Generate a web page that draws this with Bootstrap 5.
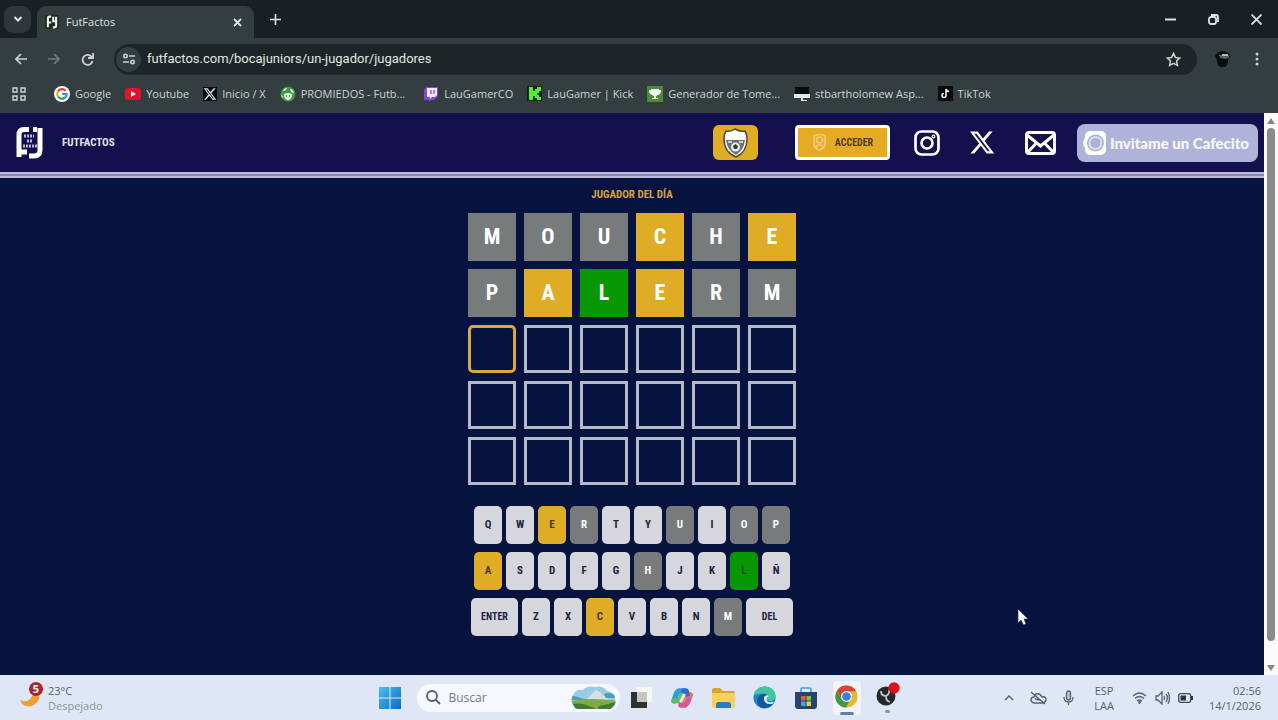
<!DOCTYPE html>
<html lang="es" class="h-100">
<head>
<meta charset="utf-8">
<meta name="viewport" content="width=device-width, initial-scale=1">
<title>FutFactos</title>
<link href="https://cdn.jsdelivr.net/npm/bootstrap@5.3.0/dist/css/bootstrap.min.css" rel="stylesheet">
<style>
:root{--ui:"Open Sans","Noto Sans",sans-serif;--cond:"DIN Condensed","Roboto Condensed","Liberation Sans Narrow",Roboto,sans-serif;--gold:#dfac26}
body{font-family:var(--ui);font-size:12px;line-height:16px;background:#05133e}
svg{display:block;flex:none}
.plain-btn{background:none;border:0;padding:0;color:inherit;display:flex;align-items:center;justify-content:center}
/* browser window */
.tab-strip{background:#182023;height:38px;color:#dfe3e3}
.tab-search{width:27px;height:27px;border-radius:9px;background:#2f3739}
.page-tab{width:217px;height:32px;background:#343d3f;border-radius:9px 9px 0 0;padding-left:8px;padding-right:12px;margin-left:2px;gap:7px;font-size:11px}
.fav{width:14px;height:14px;background:#1d2b22}
.tool-row{background:#343d3f;height:42px;color:#cdd2d2}
.address{background:#1d2527;height:31px;border-radius:16px;padding-left:2px;padding-right:16px;gap:6px}
.address input{background:none;border:0;outline:0;color:#e2e5e5;font:13px/20px Roboto,sans-serif;padding:0;min-width:0}
.site-info{width:25px;height:25px;border-radius:50%;background:#343d3f}
.tool-nav{width:114px;gap:21px;padding-left:15px}
.marks{background:#343d3f;height:33px;color:#cfd4d4;gap:14px;font-size:11px;padding:0 0 6px 12px}
.marks a{color:inherit;text-decoration:none;gap:5px;white-space:nowrap}
.apps-btn{margin-right:14px}
/* game */
.site-nav{background:#13104d;height:65px;border-bottom:6px double #bdb9da;padding:0 6px 0 15px;background-clip:padding-box}
.line-wrap{background:#8a86b4}
.brand-text{font:bold 11px/20px var(--cond);color:#e4e2f2;text-decoration:none;gap:18px}
.club-btn{width:45px;height:35px;background:var(--gold);border-radius:6px}
.login-btn{width:95px;height:35px;background:#e5ab24;border:3px solid #fff;border-radius:4px;font:bold 10px/20px var(--cond);color:#52391c;gap:8px;margin-left:37px;padding:0}
.social{gap:30px;color:#fff;margin-left:24px;margin-right:21px}
.social a{color:inherit}
.coffee{height:38px;width:181px;background:#afb3d9;border-radius:8px;color:#f7f7ff;font:900 15px/20px Lato,sans-serif;text-decoration:none;white-space:nowrap;padding-left:5px;gap:3px}
.day-title{font:bold 11px/18px var(--cond);color:#dba239;margin:8px 0 9px}
.board{display:grid;grid-template-columns:repeat(6,48px);grid-auto-rows:48px;gap:8px;margin-bottom:21px}
.tile{display:flex;align-items:center;justify-content:center;color:#fff;font:bold 22px/30px var(--cond);border:3px solid #b4bac6}
.is-miss{background:#777b7b;border-color:#777b7b;color:#fff}
.is-near{background:var(--gold);border-color:var(--gold)}
.is-hit{background:#089806;border-color:#089806}
.is-next{border-color:#dca83e;border-radius:5px}
.keys{gap:8px}
.keys>div{gap:4px}
.key{width:28px;height:38px;padding:0;border:0;border-radius:5px;background-color:#d5d7dd;color:#1b2143;font:bold 11px/16px var(--cond)}
.key.is-near{background:var(--gold);color:#4b3715}
.key.is-miss{background:#777b7b;color:#fff}
.key.is-hit{background:#089806;color:#124715}
.key-wide{width:47px;font-size:10px}
.scroller{width:14px;background:#fafafa;padding:5px 0 4px}
.thumb{width:8px;border-radius:4px;background:#8a8b8a}
.pointer{position:absolute;left:1017px;top:608px}
/* taskbar */
.task{height:45px;background:#dfe7f6;color:#596270;display:grid;grid-template-columns:1fr auto 1fr}
.badge-n{position:absolute;left:9px;top:-7px;width:14px;height:14px;border-radius:50%;background:#b3202c;color:#fff;font-weight:700;font-size:11px;line-height:14px;text-align:center}
.weather{font-size:11px;line-height:15px}
.sky{color:#8a93a0}
.seek{width:203px;height:28px;border-radius:14px;background:#f5f8fe;padding-left:9px;padding-right:3px}
.seek input{background:none;border:0;outline:0;padding:0;min-width:0;color:#737984;font-size:12px;line-height:18px}
.seek input::placeholder{color:#737984;opacity:1}
.mid{padding-left:2px}
.apps{gap:13px}
.app{width:28px;height:34px}
.app.is-on{background:#f3f4fb;border-radius:4px}
.tray{font-size:11px;line-height:15px;padding-right:17px}
</style>
</head>
<body class="d-flex flex-column min-vh-100">
<header>
  <div class="tab-strip d-flex align-items-end">
    <button class="plain-btn tab-search align-self-center ms-1 me-1" aria-label="Buscar pestañas"><svg width="10" height="10" viewBox="0 0 10 10" fill="none" stroke="currentColor" stroke-width="2"><path d="M1.500 3 5 6.500 8.500 3"/></svg></button>
    <div class="page-tab d-flex align-items-center">
      <span class="fav d-inline-flex"><svg width="14" height="14" viewBox="0 0 30 34" fill="none" stroke="#eef4e6" stroke-width="5"><path d="M13 4H9Q5 4 5 9V30M5 18H13M18 4V15H25V4M25 15V26Q25 30 20 30H17"/></svg></span>
      <span class="flex-grow-1">FutFactos</span>
      <button class="plain-btn" aria-label="Cerrar pestaña"><svg width="9" height="9" viewBox="0 0 9 9" stroke="currentColor" stroke-width="1.800"><path d="m1 1 7 7M8 1 1 8"/></svg></button>
    </div>
    <button class="plain-btn align-self-center ms-3" aria-label="Nueva pestaña"><svg width="11" height="11" viewBox="0 0 11 11" stroke="currentColor" stroke-width="1.600"><path d="M5.500 0v11M0 5.500h11"/></svg></button>
    <div class="ms-auto align-self-center d-flex align-items-center pe-3" style="gap:32px">
      <button class="plain-btn" aria-label="Minimizar"><svg width="11" height="11" viewBox="0 0 11 11" stroke="currentColor" stroke-width="2"><path d="M0 5.500h11"/></svg></button>
      <button class="plain-btn" aria-label="Restaurar"><svg width="11" height="11" viewBox="0 0 11 11" stroke="currentColor" stroke-width="1.800" fill="none"><rect x="1" y="3" width="7" height="7" rx="2"/><path d="M3 1h5q2 0 2 2v5"/></svg></button>
      <button class="plain-btn" aria-label="Cerrar"><svg width="11" height="11" viewBox="0 0 11 11" stroke="currentColor" stroke-width="1.800"><path d="m.5.5 10 10M10.500.5l-10 10"/></svg></button>
    </div>
  </div>
  <div class="tool-row d-flex align-items-center">
    <div class="tool-nav d-flex align-items-center">
      <button class="plain-btn" aria-label="Atrás"><svg width="12" height="12" viewBox="0 0 12 12" fill="none" stroke="currentColor" stroke-width="1.700"><path d="M12 6H1M6 1 1 6l5 5"/></svg></button>
      <button class="plain-btn" aria-label="Adelante"><svg width="12" height="12" viewBox="0 0 12 12" fill="none" stroke="#737c7d" stroke-width="1.700"><path d="M0 6h11M6 1l5 5-5 5"/></svg></button>
      <button class="plain-btn" aria-label="Recargar"><svg width="13" height="13" viewBox="0 0 13 13" fill="none" stroke="currentColor" stroke-width="1.800"><path d="M11 4.500A5 5 0 1 0 11.500 8M12 0v5H7"/></svg></button>
    </div>
    <div class="address d-flex align-items-center flex-grow-1">
      <button class="plain-btn site-info" aria-label="Información del sitio"><svg width="12" height="12" viewBox="0 0 12 12" fill="none" stroke="currentColor" stroke-width="1.600"><path d="M6 3h6M0 9h6"/><circle cx="2.500" cy="3" r="1.700"/><circle cx="9.500" cy="9" r="1.700"/></svg></button>
      <input class="flex-grow-1" aria-label="Dirección" value="futfactos.com/bocajuniors/un-jugador/jugadores">
      <button class="plain-btn" aria-label="Favorito"><svg width="15" height="15" viewBox="0 0 16 16" fill="none" stroke="currentColor" stroke-width="1.600"><path d="m8 1.500 2 4.300 4.700.6-3.500 3.200.9 4.700L8 12l-4.100 2.300.9-4.700L1.300 6.400 6 5.800z"/></svg></button>
    </div>
    <button class="plain-btn ms-3" aria-label="Perfil"><svg width="18" height="18" viewBox="0 0 18 18"><path d="M2 6Q4 1 10 1q6 1 7 5l-2 4q0 5-3 7H7Q4 15 4 10z" fill="#090d0e"/><path d="M6 5h10v3l-4 1-5-1z" fill="#59605f"/><path d="M9 5h6" stroke="#dce0dc" stroke-width="1.500"/></svg></button>
    <button class="plain-btn ps-3 ms-2" style="padding-right:19px" aria-label="Menú"><svg width="4" height="14" viewBox="0 0 4 14" fill="currentColor"><circle cx="2" cy="2" r="1.500"/><circle cx="2" cy="7" r="1.500"/><circle cx="2" cy="12" r="1.500"/></svg></button>
  </div>
  <nav class="marks d-flex align-items-center" aria-label="Marcadores">
    <button class="plain-btn apps-btn" aria-label="Aplicaciones"><svg width="14" height="14" viewBox="0 0 14 14" fill="none" stroke="currentColor" stroke-width="1.400"><path d="M1 1h4v4H1zM9 1h4v4H9zM1 9h4v4H1zM9 9h4v4H9z"/></svg></button>
    <a href="#" class="d-flex align-items-center"><svg width="16" height="16" viewBox="0 0 16 16" fill="none" stroke-width="2.200"><circle cx="8" cy="8" r="8" fill="#fff"/><path d="M4 5.500A4.700 4.700 0 0 1 11.500 4.700" stroke="#e34133"/><path d="M4 5.500a4.700 4.700 0 0 0 0 5" stroke="#f4b400"/><path d="M4 10.500a4.700 4.700 0 0 0 7 1.200" stroke="#31a350"/><path d="M11 11.700A4.700 4.700 0 0 0 12.600 8H8" stroke="#4285f4"/></svg>Google</a>
    <a href="#" class="d-flex align-items-center"><svg width="16" height="16" viewBox="0 0 16 16"><rect y="2" width="16" height="12" rx="3" fill="#e5102b"/><path d="m6 5 5 3-5 3z" fill="#fff"/></svg>Youtube</a>
    <a href="#" class="d-flex align-items-center"><svg width="14" height="14" viewBox="0 0 24 24"><path fill="#0b0e0f" d="M0 0h24v24H0z"/><path fill="#dde" d="M18.200 2.200h3.300l-7.200 8.300 8.500 11.200h-6.600l-5.200-6.800-6 6.800H1.700l7.700-8.800L1.300 2.200H8l4.700 6.300zm-1.100 17.600h1.800L7.100 4.100h-2z"/></svg>Inicio / X</a>
    <a href="#" class="d-flex align-items-center"><svg width="16" height="16" viewBox="0 0 16 16"><circle cx="8" cy="8" r="7.500" fill="#3a9c3f"/><path d="M3 5q1-3 4-3-1 3-4 3zM10 3q3 0 4 4-3 0-4-4zM4 8q4-2 8 0v2q-1 4-4 4t-4-4zM1 8l2 3-1 1z" fill="#e9f6e6"/><path d="M6 9h1v2H6zM9 9h1v2H9z" fill="#3a9c3f"/></svg>PROMIEDOS - Futb...</a>
    <a href="#" class="d-flex align-items-center ms-1"><svg width="16" height="16" viewBox="0 0 16 16"><path d="M3 1h12v9l-4 4H8l-2 2v-2H1V4z" fill="#8447df"/><path d="M4 2h10v7l-2 2H9l-2 2v-2H4z" fill="#f0e9ff"/><path d="M8 4v4m3-4v4" stroke="#8447df" stroke-width="1.300"/></svg>LauGamerCO</a>
    <a href="#" class="d-flex align-items-center"><svg width="15" height="15" viewBox="0 0 15 15"><path fill="#10210e" d="M0 0h15v15H0z"/><path d="M2 1h4v4h2V3h2V1h4v4h-2v2h-2v2h2v2h2v3h-4v-2H8v-2H6v4H2z" fill="#48f51f"/></svg>LauGamer | Kick</a>
    <a href="#" class="d-flex align-items-center"><svg width="16" height="16" viewBox="0 0 16 16"><path fill="#4c8a3b" d="M0 0h16v16H0z"/><path d="M4 3h8v1h2v2q-1 3-3 3l-2 1v2h2v1H5v-1h2v-2L5 9Q3 9 2 6V4h2z" fill="#f2f9ed"/></svg>Generador de Tome...</a>
    <a href="#" class="d-flex align-items-center"><svg width="16" height="16" viewBox="0 0 16 16"><path fill="#080b0c" d="M1 1h14v7H1z"/><path d="M0 8h16v4H9v2h4v1H7v-3H0z" fill="#e6e8e7"/></svg>stbartholomew Asp...</a>
    <a href="#" class="d-flex align-items-center"><svg width="15" height="15" viewBox="0 0 15 15"><path fill="#080a0b" d="M0 0h15v15H0z"/><path d="M8 3v6.500A2 2 0 1 1 6 7.500M8 3q1 2.500 3 2.500" fill="none" stroke="#f2edf1" stroke-width="1.600"/></svg>TikTok</a>
  </nav>
</header>

<div class="d-flex flex-grow-1">
  <div class="flex-grow-1">
    <div class="line-wrap">
    <nav class="site-nav d-flex align-items-center">
      <a href="#" class="d-flex align-items-center brand-text"><svg width="29" height="34" viewBox="0 0 29 34" fill="none"><path d="M14 3.500H9Q4 3.500 4 9v22M4 26h8M18 3.500h4M25 2v22q0 6-6 6h-5" stroke="#fff" stroke-width="5"/><path d="M9 10h10M12 15h5M8 20h14" stroke="#b9b7d8" stroke-width="3" stroke-dasharray="2 1"/></svg>FUTFACTOS</a>
      <button class="plain-btn club-btn ms-auto" aria-label="Club"><svg width="25" height="30" viewBox="0 0 25 30"><path d="M3 3q5 1 9-2 5 3 10 2 2 3 2 8 0 13-11 18Q1 24 1 11q0-5 2-8z" fill="#fff" stroke="#524932" stroke-width="1.500"/><path d="M3 12h19q-1 10-9 15Q4 22 3 12z" fill="#6c7178"/><circle cx="12.500" cy="19" r="4.500" fill="#eceef0"/><path d="m12.500 16 2.500 2-1 3h-3l-1-3z" fill="#343a44"/><path d="M5 14h4M16 14h4" stroke="#eee" stroke-width="1.500"/></svg></button>
      <button class="login-btn d-flex align-items-center justify-content-center"><svg width="15" height="17" viewBox="0 0 15 17" fill="none" stroke="#f0cc7a" stroke-width="1.600"><circle cx="7.500" cy="6" r="3"/><path d="M2 2Q7.500-1 13 2v9q-1 4-5.500 5Q3 15 2 11zM4 13q3-5 7 0"/></svg>ACCEDER</button>
      <div class="social d-flex align-items-center">
        <a href="#" aria-label="Instagram"><svg width="26" height="26" viewBox="0 0 26 26" fill="none" stroke="currentColor" stroke-width="2.700"><rect x="1.500" y="1.500" width="23" height="23" rx="6"/><circle cx="13" cy="13" r="5.500"/><circle cx="19.500" cy="6.500" r=".6"/></svg></a>
        <a href="#" aria-label="X"><svg width="25" height="25" viewBox="0 0 24 24" fill="currentColor"><path d="M18.200 1.500h3.600l-7.800 9L23.200 22.500H16l-5.600-7.300-6.400 7.300H.4l8.400-9.600L0 1.500h7.400l5 6.700zm-1.200 19h2L6.200 3.500H4z"/></svg></a>
        <a href="#" aria-label="Correo"><svg width="31" height="24" viewBox="0 0 31 24" fill="none" stroke="currentColor" stroke-width="3"><rect x="1.500" y="1.500" width="28" height="21" rx="2.500"/><path d="m2 4 13.500 11L29 4M3 21l8.500-9M28 21l-8.500-9"/></svg></a>
      </div>
      <a href="#" class="coffee d-flex align-items-center"><svg width="25" height="26" viewBox="0 0 25 26"><rect x="3" y="1" width="21" height="24" rx="5" fill="#fff"/><circle cx="13.500" cy="13" r="8.500" fill="#aeb1d4"/><circle cx="13.500" cy="13" r="6" fill="none" stroke="#d9dced" stroke-width="2"/><path d="M5 7Q-1 13 5 19" stroke="#fff" stroke-width="2" fill="none"/></svg>Invitame un Cafecito</a>
    </nav>
    </div>
    <main class="d-flex flex-column align-items-center">
      <h1 class="day-title">JUGADOR DEL DÍA</h1>
      <div class="board">
        <div class="tile is-miss">M</div><div class="tile is-miss">O</div><div class="tile is-miss">U</div><div class="tile is-near">C</div><div class="tile is-miss">H</div><div class="tile is-near">E</div>
        <div class="tile is-miss">P</div><div class="tile is-near">A</div><div class="tile is-hit">L</div><div class="tile is-near">E</div><div class="tile is-miss">R</div><div class="tile is-miss">M</div>
        <div class="tile is-next"></div><div class="tile"></div><div class="tile"></div><div class="tile"></div><div class="tile"></div><div class="tile"></div>
        <div class="tile"></div><div class="tile"></div><div class="tile"></div><div class="tile"></div><div class="tile"></div><div class="tile"></div>
        <div class="tile"></div><div class="tile"></div><div class="tile"></div><div class="tile"></div><div class="tile"></div><div class="tile"></div>
      </div>
      <div class="keys d-flex flex-column align-items-center">
        <div class="d-flex"><button class="key">Q</button><button class="key">W</button><button class="key is-near">E</button><button class="key is-miss">R</button><button class="key">T</button><button class="key">Y</button><button class="key is-miss">U</button><button class="key">I</button><button class="key is-miss">O</button><button class="key is-miss">P</button></div>
        <div class="d-flex"><button class="key is-near">A</button><button class="key">S</button><button class="key">D</button><button class="key">F</button><button class="key">G</button><button class="key is-miss">H</button><button class="key">J</button><button class="key">K</button><button class="key is-hit">L</button><button class="key">Ñ</button></div>
        <div class="d-flex"><button class="key key-wide">ENTER</button><button class="key">Z</button><button class="key">X</button><button class="key is-near">C</button><button class="key">V</button><button class="key">B</button><button class="key">N</button><button class="key is-miss">M</button><button class="key key-wide">DEL</button></div>
      </div>
    </main>
  </div>
  <div class="scroller d-flex flex-column align-items-center">
    <svg width="8" height="6" viewBox="0 0 8 6" fill="#858685"><path d="m4 0 4 6H0z"/></svg>
    <div class="thumb flex-grow-1 mt-1 mb-4"></div>
    <svg width="8" height="6" viewBox="0 0 8 6" fill="#858685"><path d="m4 6 4-6H0z"/></svg>
  </div>
</div>

<footer class="task align-items-center">
  <div class="d-flex align-items-center ps-3">
    <div class="position-relative ms-1 me-2"><svg width="20" height="18" viewBox="0 0 20 18"><path d="M0 11q6 3 10-1l6-8q5 5 2 10-5 7-12 5-4-1-6-6z" fill="#eba02f"/></svg><span class="badge-n">5</span></div>
    <div class="weather"><div>23°C</div><div class="sky">Despejado</div></div>
  </div>
  <div class="mid d-flex align-items-center">
    <button class="plain-btn me-3" aria-label="Inicio"><svg width="22" height="22" viewBox="0 0 22 22"><defs><linearGradient id="w" x2="1" y2="1"><stop stop-color="#4bc0ec"/><stop offset="1" stop-color="#096cc2"/></linearGradient></defs><path d="M0 0h10.500v10.500H0zM11.500 0H22v10.500H11.500zM0 11.500h10.500V22H0zM11.500 11.500H22V22H11.500z" fill="url(#w)"/></svg></button>
    <div class="seek d-flex align-items-center">
      <svg width="15" height="15" viewBox="0 0 15 15" fill="none" stroke="#555b63" stroke-width="1.800"><circle cx="6" cy="6" r="5"/><path d="m10 10 4 4"/></svg>
      <input class="flex-grow-1 ms-2" aria-label="Buscar" placeholder="Buscar">
      <svg width="46" height="24" viewBox="0 0 46 24"><defs><clipPath id="c"><path d="M3 20Q-2 14 3 8 5 3 12 4q4-5 12-3 8-2 12 4 8 1 8 8 2 6-5 10H8q-4 0-5-3z"/></clipPath></defs><g clip-path="url(#c)"><path fill="#9acbe4" d="M0 0h46v24H0z"/><path d="m17 12 8-8 5 3 9 8H15z" fill="#d8dfe3"/><path d="M0 9l17 5H0zM33 8q8-3 13 4H35z" fill="#4b9fb5"/><path d="M0 15q20-4 46 0v9H0z" fill="#7faa48"/><path d="M0 18q12-2 25 5l-8 1H0zM28 20l18-4v8H26z" fill="#3f7c2f"/></g></svg>
    </div>
    <div class="apps d-flex align-items-center ms-2">
      <button class="plain-btn app" aria-label="Vista de tareas"><svg width="21" height="21" viewBox="0 0 21 21"><path fill="#f6f7f5" d="M6 0h15v15H6z"/><path fill="#c8c7be" d="M6 5h10v10H6z"/><path d="M0 5h6v10h10v6H0z" fill="#303232"/></svg></button>
      <button class="plain-btn app" aria-label="Copilot"><svg width="23" height="22" viewBox="0 0 23 22" fill="none" stroke-width="5.500" stroke-linejoin="round" stroke-linecap="round"><path d="M12 4H8Q6 5 5 8l-2 6" stroke="#279ed7"/><path d="M3.500 13.500H8Q10 12 11 8" stroke="#5fbc66"/><path d="M10 18h4q2-1 3-4l2-6" stroke="#d6559c"/><path d="M19 8h-3Q13 9 12 13" stroke="#ee765a"/><path d="M13 4h2l1 3" stroke="#3868ce"/><path d="m13 8-3 6" stroke="#e6ebf7" stroke-width="3"/></svg></button>
      <button class="plain-btn app" aria-label="Explorador"><svg width="23" height="20" viewBox="0 0 23 20"><path d="M0 2q0-2 2-2h6l3 3h10q2 0 2 2v5H0z" fill="#d9a331"/><path d="M0 5h23v15H2q-2 0-2-2z" fill="#f7d353"/><path d="M4 20v-3q0-3 3-3h9q3 0 3 3v3z" fill="#2b7bc1"/></svg></button>
      <button class="plain-btn app" aria-label="Edge"><svg width="23" height="23" viewBox="0 0 23 23"><circle cx="11.500" cy="11.500" r="11" fill="#1485ca"/><path d="M1 9Q3 1 12 .5 23 1 22.500 11q-1 5-7 4-3-1-1-4Q12 5 1 9z" fill="#43c6a0"/><path d="M6 10q7-5 9 1-2 3 0 5 4 1 7-2-4 9-12 8-9-4-4-12z" fill="#1455a4"/><path d="M11 11q2-3 5-1-4 3-1 6 4 1 7-1l-3 3q-9 1-8-7z" fill="#e3ebf6"/></svg></button>
      <button class="plain-btn app" aria-label="Tienda"><svg width="22" height="22" viewBox="0 0 22 22"><path d="M6 6V2q0-1 1-1h8q1 0 1 1v4" fill="none" stroke="#4b9ed4" stroke-width="1.600"/><path d="M0 5h22v14q0 3-3 3H3q-3 0-3-3z" fill="#24456e"/><path d="M6 9h4.500v4.500H6z" fill="#ed593f"/><path d="M11.500 9H16v4.500h-4.500z" fill="#86bd45"/><path d="M6 14.500h4.500V19H6z" fill="#3ba9e1"/><path d="M11.500 14.500H16V19h-4.500z" fill="#f2c642"/></svg></button>
      <button class="plain-btn app is-on flex-column gap-1 pt-1" aria-label="Chrome"><svg width="23" height="23" viewBox="0 0 24 24"><circle cx="12" cy="12" r="11.500" fill="#e6b92d"/><path d="M2 6A11.500 11.500 0 0 1 22 6.500H12L7 14.500z" fill="#d64437"/><path d="M2 6l5 8.500q3 4 8 2.500l-3.500 6.500A11.500 11.500 0 0 1 2 6z" fill="#3b9b4b"/><circle cx="12" cy="12" r="5.700" fill="#fff"/><circle cx="12" cy="12" r="4.500" fill="#3f7de0"/></svg><svg width="14" height="3" viewBox="0 0 14 3"><rect width="14" height="3" rx="1.500" fill="#647da7"/></svg></button>
      <button class="plain-btn app flex-column gap-1" aria-label="OBS"><svg width="24" height="24" viewBox="0 0 24 24"><circle cx="10" cy="14" r="9.500" fill="#24272b"/><path d="M10 14q-5 0-5-5M10 14q4-2 3-6M10 14q0 5 4 6" stroke="#bfc3c7" stroke-width="1.800" fill="none"/><circle cx="18" cy="6" r="5.700" fill="#e20d1c"/></svg><svg width="5" height="3" viewBox="0 0 5 3"><rect width="5" height="3" rx="1.500" fill="#8c929c"/></svg></button>
    </div>
  </div>
  <div class="tray d-flex align-items-center justify-content-end">
    <svg width="10" height="7" viewBox="0 0 10 7" fill="none" stroke="currentColor" stroke-width="1.500"><path d="m1 6 4-4 4 4"/></svg>
    <svg class="ms-3" width="17" height="14" viewBox="0 0 17 14" fill="none" stroke="currentColor" stroke-width="1.400"><path d="M4 12h9q3-1 3-4-1-3-4-2-2-4-6-3-2 1-2 3-3 0-3 3 0 2 3 3zM1 1l14 12M5 8l5 1"/></svg>
    <svg class="ms-3" width="11" height="16" viewBox="0 0 11 16" fill="none" stroke="currentColor" stroke-width="1.300"><rect x="3.500" y="1" width="4" height="9" rx="2" fill="#b4c4dd"/><path d="M1 7q0 5 4.500 5T10 7M5.500 12v3"/></svg>
    <div class="text-center" style="margin-left:20px"><div>ESP</div><div>LAA</div></div>
    <svg style="margin-left:18px" width="15" height="12" viewBox="0 0 15 12" fill="none" stroke="currentColor" stroke-width="1.300"><path d="M1 4q6.500-6 13 0M3 6.500q4.500-4 9 0M5 9q2.500-2 5 0"/><circle cx="7.500" cy="10.500" r=".8"/></svg>
    <svg class="ms-2" width="15" height="14" viewBox="0 0 15 14" fill="none" stroke="currentColor" stroke-width="1.300"><path d="M1 5h2l4-4v12L3 9H1zM9 5q1 2 0 4M11 3q3 4 0 8M13 1q3 6 0 12"/></svg>
    <svg class="ms-2" width="15" height="10" viewBox="0 0 15 10"><rect x=".7" y=".7" width="12" height="8.600" rx="2" fill="none" stroke="#444b54" stroke-width="1.300"/><path d="M2.500 2.500H8v5H2.500zM13 3h2v4h-2z" fill="#30363e"/></svg>
    <div class="text-end ms-3"><div>02:56</div><div>14/1/2026</div></div>
  </div>
</footer>
<svg class="pointer" width="11" height="18" viewBox="0 0 11 18"><path d="M1 1v14l3-3 2.500 5L9 16l-2-5h4z" fill="#fff" stroke="#1b2750" stroke-width=".6"/></svg>
<script src="https://cdn.jsdelivr.net/npm/bootstrap@5.3.0/dist/js/bootstrap.bundle.min.js"></script>
</body>
</html>
